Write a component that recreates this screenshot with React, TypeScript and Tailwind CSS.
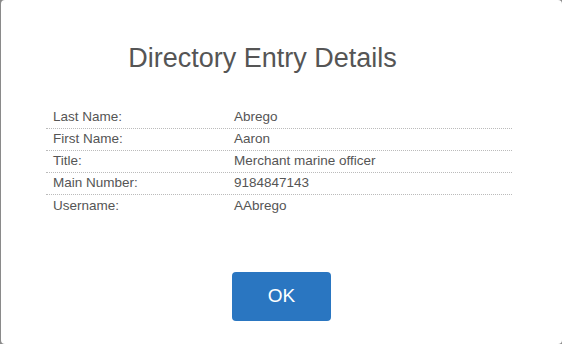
const rows = [
  { label: 'Last Name:', value: 'Abrego' },
  { label: 'First Name:', value: 'Aaron' },
  { label: 'Title:', value: 'Merchant marine officer' },
  { label: 'Main Number:', value: '9184847143' },
  { label: 'Username:', value: 'AAbrego' },
]

export default function App() {
  return (
    <div className="w-[562px] h-[344px] bg-[#8a8a8a] pl-px overflow-hidden font-['Liberation_Sans',Arial,sans-serif]">
      <div className="w-[561px] h-[344px] bg-white rounded-[4px] flex flex-col">
        {/* Header */}
        <div className="pt-[41px] pr-[38px] text-center">
          <h1 className="text-[27px] leading-[34px] text-[#555555]">Directory Entry Details</h1>
        </div>

        {/* Details */}
        <div className="mt-[32px] ml-[45px] w-[466px]">
          {rows.map((r, i) => (
            <div
              key={r.label}
              className={
                'flex h-[22px] items-center text-[13.5px] text-[#555555] ' +
                (i < rows.length - 1 ? 'border-b border-dotted border-[#bbbbbb]' : '')
              }
            >
              <span className="w-[188px] pl-[7px]">{r.label}</span>
              <span>{r.value}</span>
            </div>
          ))}
        </div>

        {/* Footer */}
        <div className="mt-auto mb-[23px] flex justify-center">
          <button className="w-[99px] h-[49px] rounded-[4px] bg-[#2a76c1] text-white text-[19px]">
            OK
          </button>
        </div>
      </div>
    </div>
  )
}
